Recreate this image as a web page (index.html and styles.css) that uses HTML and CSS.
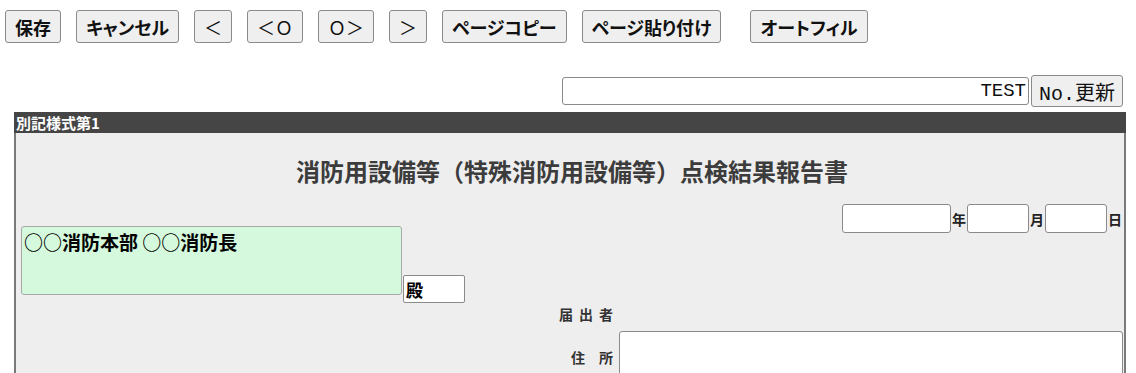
FILE: index.html
```html
<!DOCTYPE html>
<html lang="ja">
<head>
  <meta charset="UTF-8">
  <meta name="viewport" content="width=device-width, initial-scale=1.0">
  <title>点検結果報告書</title>
  <link rel="stylesheet" href="styles.css">
</head>
<body>
  <div class="toolbar">
    <button type="button" class="btn">保存</button>
    <button type="button" class="btn">キャンセル</button>
    <button type="button" class="btn btn-arrow">＜</button>
    <button type="button" class="btn btn-arrow">＜Ｏ</button>
    <button type="button" class="btn btn-arrow">Ｏ＞</button>
    <button type="button" class="btn btn-arrow">＞</button>
    <button type="button" class="btn">ページコピー</button>
    <button type="button" class="btn">ページ貼り付け</button>
    <button type="button" class="btn btn-far">オートフィル</button>
  </div>

  <div class="numbar">
    <input type="text" class="num-input" value="TEST">
    <button type="button" class="num-btn">No.更新</button>
  </div>

  <div class="sheet">
    <div class="sheet-head">別記様式第1</div>
    <div class="sheet-body">
      <h1 class="title">消防用設備等（特殊消防用設備等）点検結果報告書</h1>

      <div class="head">
        <div class="addressee">
          <textarea class="to">○○消防本部 ○○消防長</textarea>
          <input type="text" class="dono" value="殿">
        </div>
        <div class="date">
          <input type="text" class="date-y"><span class="unit">年</span>
          <input type="text" class="date-md"><span class="unit">月</span>
          <input type="text" class="date-md"><span class="unit">日</span>
        </div>
      </div>

      <div class="fields">
        <div class="field-label applicant">届出者</div>
        <div></div>
        <label class="field-label" for="addr">住　所</label>
        <textarea id="addr" class="addr"></textarea>
      </div>
    </div>
  </div>
</body>
</html>
```

FILE: styles.css
```css
body {
  margin: 0;
  background: #fff;
  color: #000;
  font-family: "Noto Sans CJK JP", "Noto Sans", sans-serif;
}
.toolbar {
  display: flex;
  gap: 15px;
  padding: 10px 5px 0;
}
.btn {
  height: 33px;
  padding: 0 9px;
  background: #efefef;
  border: 1px solid #8a8a8a;
  border-radius: 3px;
  font-family: inherit;
  font-size: 18px;
  font-weight: bold;
  font-feature-settings: "palt";
  color: #111;
  box-sizing: border-box;
}
.btn-arrow {
  font-feature-settings: normal;
  font-weight: normal;
}
.btn-far {
  margin-left: 14px;
}
.numbar {
  display: flex;
  justify-content: flex-end;
  align-items: center;
  gap: 2px;
  margin-top: 32px;
  padding-right: 13px;
}
.num-input {
  width: 467px;
  height: 28px;
  box-sizing: border-box;
  border: 1px solid #8a8a8a;
  border-radius: 3px;
  padding: 0 2px;
  text-align: right;
  font-family: "Liberation Mono", "Noto Sans CJK JP", monospace;
  font-size: 19px;
  color: #111;
}
.num-btn {
  height: 32px;
  padding: 0 7px;
  background: #efefef;
  border: 1px solid #8a8a8a;
  border-radius: 3px;
  font-family: "Liberation Mono", "Noto Sans CJK JP", monospace;
  font-size: 20px;
  color: #111;
}
.sheet {
  margin: 5px 10px 0 14px;
}
.sheet-head {
  height: 21px;
  line-height: 21px;
  padding-left: 2px;
  background: #454545;
  color: #fff;
  font-size: 15px;
  font-weight: bold;
}
.sheet-body {
  background: #eeeeee;
  border-left: 2px solid #7a7a7a;
  border-right: 2px solid #7a7a7a;
  padding: 0 1px 20px 5px;
  min-height: 300px;
}
.title {
  margin: 0;
  padding-top: 22px;
  line-height: 32px;
  text-align: center;
  font-size: 24px;
  font-weight: bold;
  color: #3c3c3c;
}
.head {
  display: flex;
  justify-content: space-between;
  align-items: flex-start;
  margin-top: 17px;
}
.addressee {
  display: flex;
  align-items: flex-end;
  gap: 1px;
  padding-top: 22px;
}
.to {
  width: 381px;
  height: 69px;
  box-sizing: border-box;
  margin: 0;
  padding: 1px 2px;
  background: #d4f9dc;
  border: 1px solid #a8a8a8;
  border-radius: 3px;
  resize: none;
  font-family: inherit;
  font-size: 19px;
  font-weight: bold;
  color: #000;
}
.dono {
  width: 62px;
  height: 28px;
  box-sizing: border-box;
  margin-bottom: -8px;
  padding: 0 2px;
  border: 1px solid #8a8a8a;
  border-radius: 2px;
  font-family: inherit;
  font-size: 17px;
  font-weight: bold;
  color: #000;
}
.date {
  display: flex;
  align-items: center;
}
.date input {
  height: 29px;
  box-sizing: border-box;
  border: 1px solid #8a8a8a;
  border-radius: 3px;
  background: #fff;
}
.date-y {
  width: 109px;
}
.date-md {
  width: 62px;
}
.unit {
  width: 16px;
  text-align: center;
  font-size: 14px;
  font-weight: bold;
  color: #222;
}
.fields {
  display: grid;
  grid-template-columns: 592px 1fr;
  column-gap: 6px;
  row-gap: 7px;
  align-items: center;
  margin-top: 10px;
}
.field-label {
  text-align: right;
  font-size: 14px;
  font-weight: bold;
  color: #333;
  line-height: 19px;
}
.applicant {
  letter-spacing: 6px;
  margin-right: -6px;
}
.addr {
  height: 52px;
  box-sizing: border-box;
  margin: 0;
  border: 1px solid #8a8a8a;
  border-radius: 3px;
  resize: none;
  background: #fff;
}
```
